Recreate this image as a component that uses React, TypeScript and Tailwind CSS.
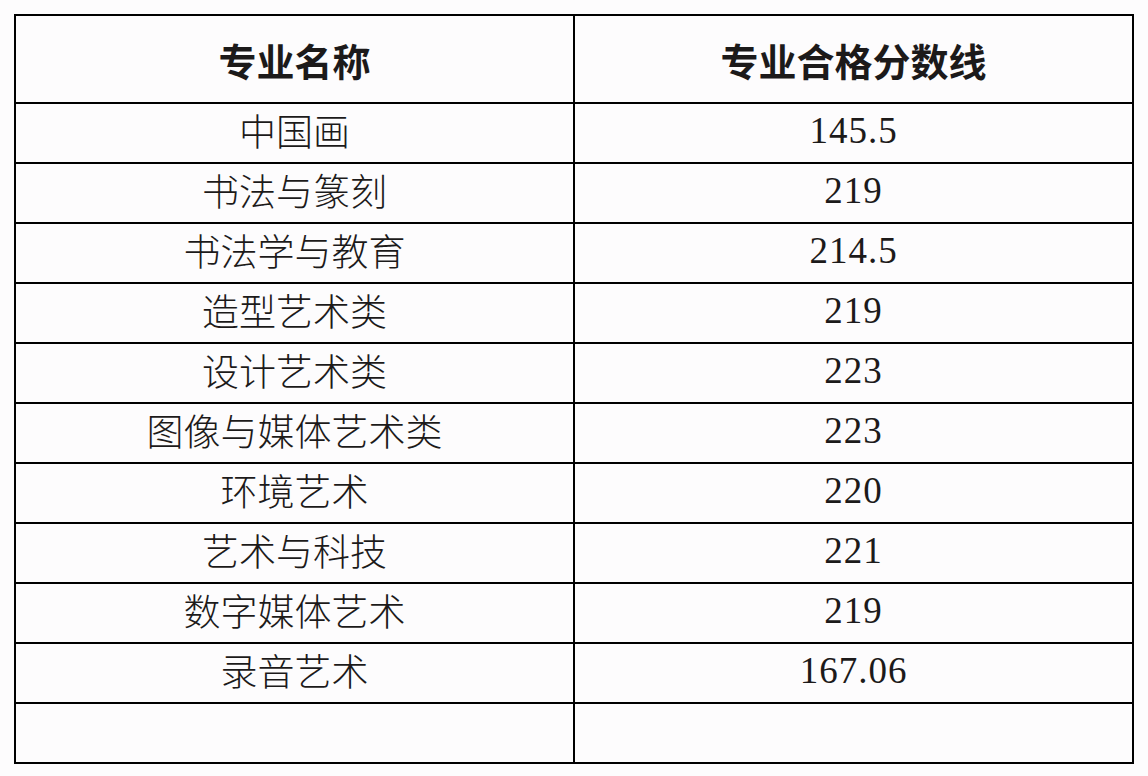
const rows: [string, string][] = [
  ["中国画", "145.5"],
  ["书法与篆刻", "219"],
  ["书法学与教育", "214.5"],
  ["造型艺术类", "219"],
  ["设计艺术类", "223"],
  ["图像与媒体艺术类", "223"],
  ["环境艺术", "220"],
  ["艺术与科技", "221"],
  ["数字媒体艺术", "219"],
  ["录音艺术", "167.06"],
  ["", ""],
];

const App = () => {
  return (
    <div className="min-h-screen w-full bg-[#fdfcfd] pt-[14px] pl-[14px]">
      <table className="w-[1120px] table-fixed border-collapse text-[#1c1a1a]">
        <thead>
          <tr className="h-[88px]">
            <th className="w-1/2 border-2 border-black text-center font-['Noto_Sans_CJK_SC',sans-serif] text-[38px] font-bold">
              专业名称
            </th>
            <th className="w-1/2 border-2 border-black text-center font-['Noto_Sans_CJK_SC',sans-serif] text-[38px] font-bold">
              专业合格分数线
            </th>
          </tr>
        </thead>
        <tbody>
          {rows.map(([name, score], i) => (
            <tr key={i} className="h-[60px]">
              <td className="border-2 border-black pb-[6px] text-center font-['Noto_Sans_CJK_SC',sans-serif] text-[37px] font-light leading-none">
                {name}
              </td>
              <td className="border-2 border-black pb-[5px] text-center font-['Liberation_Serif',serif] text-[37px] tracking-[1px] leading-none">
                {score}
              </td>
            </tr>
          ))}
        </tbody>
      </table>
    </div>
  );
};

export default App;
